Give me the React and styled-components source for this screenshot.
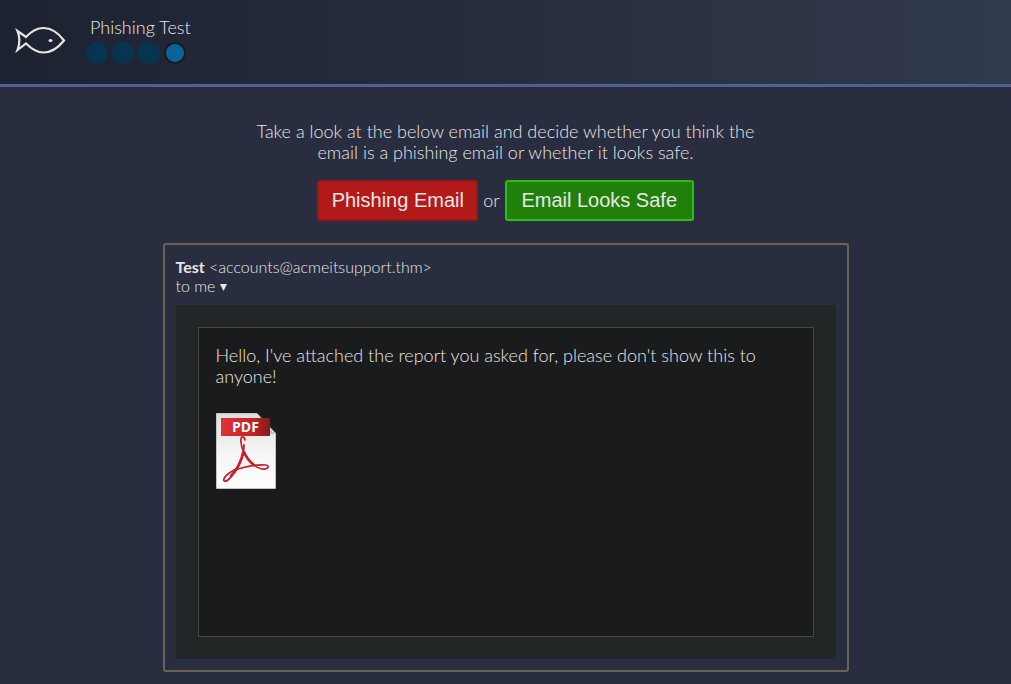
import React from "react";
import styled, { createGlobalStyle } from "styled-components";

const GlobalStyle = createGlobalStyle`
  *, *::before, *::after { box-sizing: border-box; }
  body {
    margin: 0;
    background: #282d40;
    color: #e8e6e3;
    font-family: Lato, "Open Sans", sans-serif;
    font-size: 18px;
    font-weight: 300;
    line-height: 21px;
  }
`;

const Header = styled.header`
  display: flex;
  align-items: flex-start;
  gap: 20px;
  height: 87px;
  padding: 17px 15px 0;
  border-bottom: 3px solid #4f6190;
  background: linear-gradient(to right, #1d2231, #31394c);
`;

const FishLogo = styled.svg`
  width: 51px;
  height: 28px;
  margin-top: 9px;
`;

const Title = styled.h1`
  margin: 0 0 4px 4px;
  font: inherit;
`;

const Steps = styled.ol`
  display: flex;
  gap: 4px;
  margin: 0;
  padding: 0;
  list-style: none;
`;

const Step = styled.li`
  width: 22px;
  height: 22px;
  border-radius: 50%;
  border: 2px solid ${(p) => (p.$current ? "#181d20" : "#07344f")};
  background: ${(p) => (p.$current ? "#0b6499" : "#07344f")};
`;

const Main = styled.main`
  max-width: 686px;
  margin: 0 auto;
  padding: 34px 0 12px;
`;

const Intro = styled.p`
  max-width: 540px;
  margin: 0 auto;
  text-align: center;
`;

const Choices = styled.div`
  display: flex;
  justify-content: center;
  align-items: center;
  gap: 5px;
  margin: 17px 0 22px;
`;

const ChoiceButton = styled.button`
  min-width: ${(p) => (p.$safe ? 189 : 161)}px;
  height: 41px;
  padding: 0 8px 2px;
  border: 2px solid ${(p) => (p.$safe ? "#2fbd13" : "#9f1414")};
  border-radius: 3px;
  background: ${(p) => (p.$safe ? "#20800a" : "#b21919")};
  color: inherit;
  font: 400 20px/24px "Liberation Sans", Arial, sans-serif;
  cursor: pointer;
`;

const Email = styled.article`
  padding: 12px 11px 11px;
  border: 2px solid #6b6254;
  border-radius: 3px;
`;

const EmailHeader = styled.header`
  margin-bottom: 10px;
  font-size: 16px;
  line-height: 19px;
`;

const Sender = styled.strong`
  font-weight: 700;
`;

const Recipient = styled.div`
  display: flex;
  align-items: center;
  gap: 5px;
`;

const Arrow = styled.svg`
  width: 7px;
  height: 7px;
  margin-top: 3px;
`;

const EmailBody = styled.div`
  padding: 22px;
  background: #222627;
`;

const Message = styled.div`
  min-height: 310px;
  padding: 17px;
  border: 1px solid #43474a;
  background: #1a1b1d;
`;

const MessageText = styled.p`
  margin: 0 0 26px;
`;

const Attachment = styled.a`
  display: inline-block;
`;

const PdfIcon = styled.svg`
  display: block;
  width: 60px;
  height: 76px;
`;

export default function App() {
  return (
    <>
      <GlobalStyle />
      <Header>
        <FishLogo viewBox="0 0 51 28" fill="none" stroke="#e8e6e3" strokeWidth="2.200" role="img" aria-label="Fish">
          <path d="M2.500 5 L11 11 C17 4.500 22 2 28.500 2 C37 2 43 6.500 49 14.500 C43 22 37 26.500 28.500 26.500 C22 26.500 17 23.500 11 17.500 L2.500 24 C5 17.500 5 11 2.500 5 Z" />
          <ellipse cx="35.500" cy="14.500" rx="2" ry="1.500" fill="#e8e6e3" stroke="none" />
        </FishLogo>
        <div>
          <Title>Phishing Test</Title>
          <Steps aria-label="Progress">
            <Step />
            <Step />
            <Step />
            <Step $current aria-current="step" />
          </Steps>
        </div>
      </Header>
      <Main>
        <Intro>
          Take a look at the below email and decide whether you think the
          <br />
          email is a phishing email or whether it looks safe.
        </Intro>
        <Choices>
          <ChoiceButton type="button">Phishing Email</ChoiceButton>
          <span>or</span>
          <ChoiceButton type="button" $safe>Email Looks Safe</ChoiceButton>
        </Choices>
        <Email>
          <EmailHeader>
            <div>
              <Sender>Test</Sender> &lt;accounts@acmeitsupport.thm&gt;
            </div>
            <Recipient>
              to me
              <Arrow viewBox="0 0 7 7" aria-hidden="true">
                <path d="M0 0 H7 L3.500 7 Z" fill="#e8e6e3" />
              </Arrow>
            </Recipient>
          </EmailHeader>
          <EmailBody>
            <Message>
              <MessageText>
                Hello, I've attached the report you asked for, please don't show this to anyone!
              </MessageText>
              <Attachment href="#report" aria-label="PDF attachment">
                <PdfIcon viewBox="0 0 60 76" aria-hidden="true">
                  <defs>
                    <linearGradient id="page" x1="0" y1="0" x2="0" y2="1">
                      <stop offset="0" stopColor="#dedede" />
                      <stop offset="0.500" stopColor="#f4f4f4" />
                      <stop offset="1" stopColor="#ffffff" />
                    </linearGradient>
                    <linearGradient id="band" x1="0" y1="0" x2="1" y2="0">
                      <stop offset="0" stopColor="#dc3338" />
                      <stop offset="0.600" stopColor="#c52529" />
                      <stop offset="1" stopColor="#85191c" />
                    </linearGradient>
                  </defs>
                  <path d="M0.500 0.500 H41 L59.500 20 V75.500 H0.500 Z" fill="url(#page)" stroke="#c4c4c4" />
                  <path d="M54 14 V4 L60 10 V20 Z" fill="#1a1b1d" />
                  <path d="M54 16 L59 21 H54 Z" fill="#bdbdbd" />
                  <rect x="5" y="5" width="49" height="18" fill="url(#band)" />
                  <text x="29.500" y="19" textAnchor="middle" fill="#ffffff" fontFamily="Liberation Sans Narrow, Open Sans, sans-serif" fontWeight="700" fontSize="14">PDF</text>
                  <g fill="none" stroke="#c4202a" strokeLinecap="round" strokeLinejoin="round">
                    <path d="M29 27 C28 22 24 23 25 29 C26 41 36 54 46 56 C52 57 54 53 50 52 C40 51 28 54 19 57" strokeWidth="1.700" />
                    <path d="M28 32 C28 43 21 58 13 66 C9 70 6 68 9 64 C12 60 16 58 20 56" strokeWidth="1.800" />
                    <path d="M27 40 C26 47 21 57 15 63 M28 39 C30 44 34 49 38 52" strokeWidth="2.600" />
                  </g>
                </PdfIcon>
              </Attachment>
            </Message>
          </EmailBody>
        </Email>
      </Main>
    </>
  );
}
